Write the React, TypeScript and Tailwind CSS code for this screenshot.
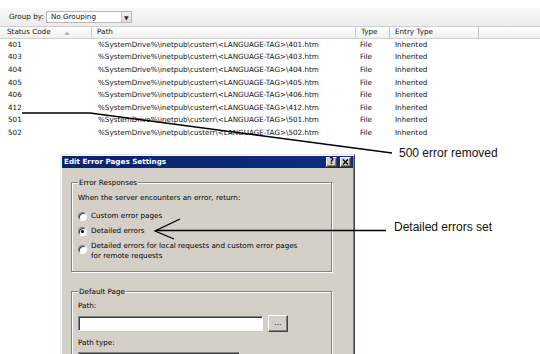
const codes = ["401", "403", "404", "405", "406", "412", "501", "502"];

function Radio({ checked }: { checked?: boolean }) {
  return (
    <span className="flex h-[9px] w-[9px] shrink-0 items-center justify-center rounded-full border border-t-[#808080] border-l-[#808080] border-r-white border-b-white bg-white shadow-[inset_1px_1px_0_#404040]">
      {checked && <span className="h-[3px] w-[3px] rounded-full bg-black" />}
    </span>
  );
}

function CaptionButton({ children }: { children: React.ReactNode }) {
  return (
    <span className="flex h-[10px] w-[11px] items-center justify-center border border-t-white border-l-white border-r-[#404040] border-b-[#404040] bg-[#d4d0c8] text-[8px] font-bold leading-none text-black shadow-[inset_-1px_-1px_0_#808080]">
      {children}
    </span>
  );
}

export default function App() {
  return (
    <div className="relative h-[354px] w-[540px] overflow-hidden bg-white font-['DejaVu_Sans',sans-serif] text-[7.2px] text-[#111]">
      <div className="h-[8px]" />

      {/* Group by toolbar */}
      <div className="flex h-[18px] items-center bg-gradient-to-b from-[#f8f8f8] to-[#ececec] pl-[9px]">
        <span>Group by:</span>
        <div className="ml-[2px] flex h-[12px] w-[86px] items-center border border-[#b8b8b8] bg-white">
          <span className="flex-1 pl-[4px]">No Grouping</span>
          <span className="flex h-full w-[10px] items-center justify-center border-l border-[#c8c8c8] bg-gradient-to-b from-[#f4f4f4] to-[#dcdcdc] text-[6px] text-[#333]">
            ▼
          </span>
        </div>
      </div>

      {/* column header */}
      <div className="flex h-[13px] border-y border-[#d0d0d0] bg-gradient-to-b from-white to-[#f0f0f0]">
        <div className="flex w-[92px] items-center border-r border-[#c8c8c8] pl-[7px]">
          Status Code
          <svg className="ml-[13px]" width="6" height="4" viewBox="0 0 6 4">
            <polygon points="0,4 3,0.5 6,4" fill="#b8b8b8" />
          </svg>
        </div>
        <div className="flex w-[264px] items-center border-r border-[#c8c8c8] pl-[5px]">Path</div>
        <div className="flex w-[34px] items-center border-r border-[#c8c8c8] pl-[5px]">Type</div>
        <div className="flex w-[89px] items-center border-r border-[#c8c8c8] pl-[5px]">Entry Type</div>
        <div className="flex-1" />
      </div>

      {/* rows */}
      <div>
        {codes.map((c) => (
          <div key={c} className="flex h-[12.6px] items-center">
            <span className="w-[92px] pl-[8px]">{c}</span>
            <span className="w-[264px] pl-[6px]">
              %SystemDrive%\inetpub\custerr\&lt;LANGUAGE-TAG&gt;\{c}.htm
            </span>
            <span className="w-[34px] pl-[4px]">File</span>
            <span className="w-[89px] pl-[5px]">Inherited</span>
          </div>
        ))}
      </div>

      {/* dialog window */}
      <div className="absolute left-[60px] top-[154px] h-[220px] w-[295px] border border-t-[#e6e6e6] border-l-[#e6e6e6] border-r-[#404040] border-b-[#404040] bg-[#d4d0c8] p-[1px] text-black shadow-[inset_1px_1px_0_#fff,inset_-1px_-1px_0_#808080]">
        <div className="flex h-[12px] items-center bg-gradient-to-r from-[#0a246a] to-[#0e2d7e] pl-[2px] pr-[2px]">
          <span className="flex-1 font-bold text-white">Edit Error Pages Settings</span>
          <CaptionButton>?</CaptionButton>
          <span className="w-[3px]" />
          <CaptionButton>
            <svg width="7" height="6" viewBox="0 0 7 6">
              <path d="M1 0.5 L6 5.5 M6 0.5 L1 5.5" stroke="#000" strokeWidth="1.4" />
            </svg>
          </CaptionButton>
        </div>

        <fieldset className="ml-[9px] mt-[9.5px] w-[261px] border border-[#808080] px-[6px] pb-[10px] shadow-[inset_1px_1px_0_#fff,1px_1px_0_#fff]">
          <legend className="bg-[#d4d0c8] px-[1px] leading-[9px]">Error Responses</legend>
          <div className="mt-[6.5px] h-[10px] leading-[10px]">When the server encounters an error, return:</div>
          <div className="mt-[8px] flex h-[10px] items-center gap-[4px]">
            <Radio />
            <span>Custom error pages</span>
          </div>
          <div className="mt-[5px] flex h-[10px] items-center gap-[4px]">
            <Radio checked />
            <span>Detailed errors</span>
          </div>
          <div className="mt-[5px] flex items-start gap-[4px]">
            <span className="mt-[3.5px]">
              <Radio />
            </span>
            <span className="leading-[10px]">
              Detailed errors for local requests and custom error pages
              <br />
              for remote requests
            </span>
          </div>
        </fieldset>

        <fieldset className="ml-[9px] mt-[14.5px] w-[261px] border border-[#808080] px-[6px] pb-[10px] shadow-[inset_1px_1px_0_#fff,1px_1px_0_#fff]">
          <legend className="bg-[#d4d0c8] px-[1px] leading-[9px]">Default Page</legend>
          <div className="mt-[5.5px] h-[10px] leading-[10px]">Path:</div>
          <div className="mt-[4px] flex h-[17px] items-center">
            <div className="h-[15px] w-[185px] border border-t-[#808080] border-l-[#808080] border-r-white border-b-white bg-white shadow-[inset_1px_1px_0_#404040]" />
            <div className="ml-[5px] flex h-[17px] w-[20px] items-center justify-center border border-t-white border-l-white border-r-[#404040] border-b-[#404040] bg-[#d4d0c8] shadow-[inset_-1px_-1px_0_#808080]">
              ...
            </div>
          </div>
          <div className="mt-[6px] h-[10px] leading-[10px]">Path type:</div>
          <div className="mt-[4px] h-[15px] w-[162px] border border-t-[#808080] border-l-[#808080] border-r-white border-b-white bg-white shadow-[inset_1px_1px_0_#404040]" />
        </fieldset>
      </div>

      {/* annotations */}
      <svg className="pointer-events-none absolute left-0 top-0" width="540" height="354" viewBox="0 0 540 354">
        <polyline points="22,113 90,113 392,153" fill="none" stroke="#000" strokeWidth="1.3" />
        <line x1="156" y1="230.5" x2="386" y2="230.5" stroke="#000" strokeWidth="1.3" />
        <polyline points="180,219 155,231 174,239" fill="none" stroke="#000" strokeWidth="1.3" />
      </svg>
      <span className="absolute left-[399px] top-[146px] font-['Liberation_Sans',Arial,sans-serif] text-[12px] leading-[14px] text-[#111]">
        500 error removed
      </span>
      <span className="absolute left-[394px] top-[220px] font-['Liberation_Sans',Arial,sans-serif] text-[12px] leading-[14px] text-[#111]">
        Detailed errors set
      </span>
    </div>
  );
}
